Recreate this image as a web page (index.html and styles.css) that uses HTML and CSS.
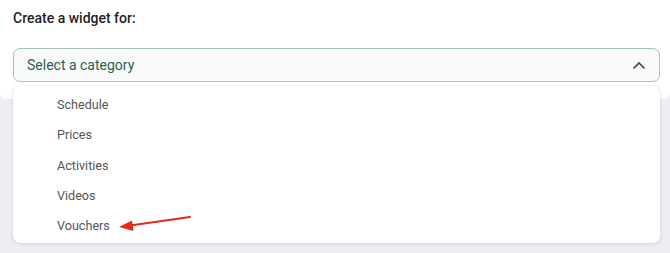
FILE: index.html
```html
<!DOCTYPE html>
<html>
<head>
<meta charset="utf-8">
<link rel="stylesheet" href="styles.css">
</head>
<body>
<div class="top">
  <h1 class="title">Create a widget for:</h1>
  <div class="select">
    <span class="select-text">Select a category</span>
    <svg class="chev" width="14" height="9" viewBox="0 0 14 9"><path d="M1.5 7.5 L7 2 L12.5 7.5" fill="none" stroke="#444" stroke-width="1.6"/></svg>
  </div>
</div>
<div class="menu">
  <div class="item">Schedule</div>
  <div class="item">Prices</div>
  <div class="item">Activities</div>
  <div class="item">Videos</div>
  <div class="item">Vouchers</div>
  <svg class="arrow" width="80" height="20" viewBox="0 0 80 20"><line x1="72" y1="3" x2="12" y2="11.5" stroke="#e32b1b" stroke-width="2.2" stroke-linecap="round"/><path d="M1 13 L14 6.5 L15.5 17 Z" fill="#e32b1b"/></svg>
</div>
</body>
</html>
```
FILE: styles.css
```css
html, body { margin: 0; padding: 0; }
body {
  width: 670px;
  height: 253px;
  background: #eceef2;
  font-family: "Roboto", "Noto Sans", sans-serif;
  position: relative;
  overflow: hidden;
}
.top {
  background: #ffffff;
  height: 99px;
  padding: 9px 10px 0 13px;
  box-sizing: border-box;
  border-radius: 0 0 6px 6px;
}
.title {
  margin: 0;
  font-size: 14px;
  font-weight: 500;
  color: #1f1f1f;
  line-height: 18px;
}
.select {
  margin-top: 21px;
  height: 34px;
  box-sizing: border-box;
  border: 1px solid #a8c3b9;
  border-radius: 7px;
  background: #f7faf9;
  display: flex;
  align-items: center;
  justify-content: space-between;
  padding: 0 13px 0 13px;
}
.select-text {
  font-size: 14px;
  color: #2e5e4e;
}
.chev { display: block; }
.menu {
  position: absolute;
  left: 13px;
  top: 86px;
  width: 647px;
  height: 157px;
  box-sizing: border-box;
  background: #ffffff;
  border-radius: 7px;
  box-shadow: 0 1px 4px rgba(0,0,0,0.10), 0 0 1px rgba(0,0,0,0.12);
  padding: 10px 0 0 44px;
}
.item {
  font-size: 12.6px;
  color: #555;
  height: 30.3px;
  line-height: 18px;
}
.arrow {
  position: absolute;
  left: 105px;
  top: 128px;
}
```
